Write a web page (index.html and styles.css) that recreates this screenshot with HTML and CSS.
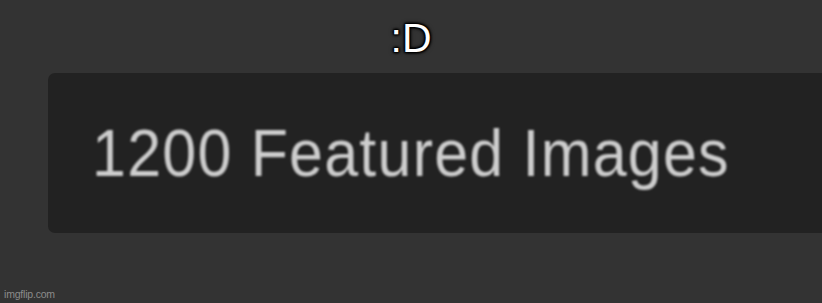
FILE: index.html
```html
<!DOCTYPE html>
<html lang="en">
<head>
<meta charset="utf-8">
<title>1200 Featured Images</title>
<link rel="stylesheet" href="styles.css">
</head>
<body>
<div class="page">
  <div class="caption">:D</div>
  <div class="panel">
    <div class="count">1200 Featured Images</div>
  </div>
  <div class="watermark">imgflip.com</div>
</div>
</body>
</html>
```
FILE: styles.css
```css
html, body {
  margin: 0;
  padding: 0;
  background: #333333;
  overflow: hidden;
}

.page {
  width: 822px;
  height: 303px;
  display: flex;
  flex-direction: column;
  font-family: "Liberation Sans", Arial, sans-serif;
  overflow: hidden;
}

.caption {
  padding-top: 18px;
  height: 40px;
  font-size: 41px;
  line-height: 40px;
  text-align: center;
  color: #ffffff;
  text-shadow: 1px 1px 2px #000, -1px -1px 2px #000, 1px -1px 2px #000, -1px 1px 2px #000, 0 0 5px #000;
}

.panel {
  margin-top: 15px;
  margin-left: 48px;
  margin-right: -30px;
  height: 160px;
  box-sizing: border-box;
  background: #222222;
  border-radius: 7px;
  padding-top: 48px;
  padding-left: 44px;
}

.count {
  font-size: 61px;
  line-height: 61px;
  letter-spacing: 1.2px;
  color: #cdcdcd;
  filter: blur(0.8px);
  white-space: nowrap;
  transform: scaleY(1.08);
  transform-origin: 0 0;
}

.watermark {
  margin-top: 55px;
  padding-left: 4px;
  font-size: 10.5px;
  line-height: 12px;
  color: #8c8c8c;
  letter-spacing: -0.2px;
}
```
